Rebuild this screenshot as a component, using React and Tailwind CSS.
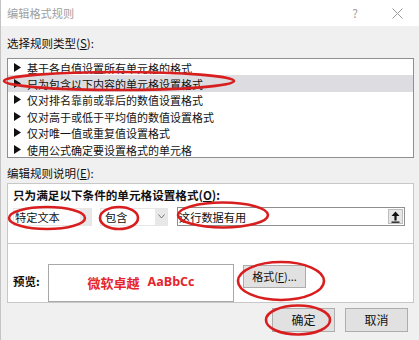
import React from "react";

const rules = [
    "基于各自值设置所有单元格的格式",
    "只为包含以下内容的单元格设置格式",
    "仅对排名靠前或靠后的数值设置格式",
    "仅对高于或低于平均值的数值设置格式",
    "仅对唯一值或重复值设置格式",
    "使用公式确定要设置格式的单元格",
];

const Arrow = () => (
    <svg width="7" height="9" viewBox="0 0 7 9" className="shrink-0">
        <path d="M0 0 L7 4.5 L0 9 Z" fill="#111" />
    </svg>
);

const Chevron = () => (
    <svg width="7" height="5" viewBox="0 0 7 5">
        <path d="M0.5 0.5 L3.5 4 L6.5 0.5" fill="none" stroke="#777" strokeWidth="1" />
    </svg>
);

const App = () => {
    return (
        <div className="relative w-[419px] h-[340px] bg-[#f0f0f0] border-l border-[#c4c4c4] overflow-hidden font-['Noto_Sans_CJK_SC','Microsoft_YaHei',sans-serif] text-[11px] text-[#111]">
            {/* title bar */}
            <div className="h-[26px] bg-white flex items-center pl-[6px] pr-[16px] text-[#a0a0a0]">
                <span className="text-[11.2px]">编辑格式规则</span>
                <span className="ml-auto text-[12px] mr-[34px]">?</span>
                <svg width="11" height="11" viewBox="0 0 11 11">
                    <path d="M0.5 0.5 L10.5 10.5 M10.5 0.5 L0.5 10.5" stroke="#9a9a9a" strokeWidth="1" />
                </svg>
            </div>

            <div className="mt-[10px] ml-[6px] h-[14px] leading-[14px] text-[11.5px]">
                选择规则类型(<u>S</u>):
            </div>

            {/* rule type list */}
            <div className="mt-[8px] ml-[6px] w-[407px] h-[100px] bg-white border border-[#8f8f8f] flex flex-col">
                {rules.map((r, i) => (
                    <div
                        key={r}
                        className={`h-[16.4px] flex items-center gap-[6px] pl-[6px] ${i === 1 ? "bg-[#dcdce1]" : ""}`}
                    >
                        <Arrow />
                        <span className="leading-[16px] mt-[1px]">{r}</span>
                    </div>
                ))}
            </div>

            <div className="mt-[8px] ml-[6px] h-[14px] leading-[14px] text-[11.5px]">
                编辑规则说明(<u>E</u>):
            </div>

            {/* rule description */}
            <div className="mt-[3px] ml-[6px] w-[407px] h-[120px] bg-white border border-[#c8c8c8] flex flex-col">
                <div className="h-[60px] border-b border-[#c8c8c8] px-[5px]">
                    <div className="mt-[4px] h-[14px] leading-[14px] font-bold text-[11.6px]">
                        只为满足以下条件的单元格设置格式(<u>O</u>):
                    </div>
                    <div className="mt-[5px] flex items-center h-[19px]">
                        <div className="w-[79px] h-[18px] flex border border-[#e6e6e6] bg-white">
                            <span className="flex-1 pl-[1px] leading-[16px] text-[11.2px]">特定文本</span>
                            <span className="w-[11px] bg-[#e8e8e8]"></span>
                        </div>
                        <div className="ml-[8px] w-[68px] h-[18px] flex border border-[#e6e6e6] bg-white">
                            <span className="flex-1 pl-[4px] leading-[16px] text-[11.2px]">包含</span>
                            <span className="w-[12px] bg-[#e8e8e8] flex items-center justify-center">
                                <Chevron />
                            </span>
                        </div>
                        <div className="ml-[9px] w-[228px] h-[19px] flex items-center border border-[#8f8f8f] bg-white">
                            <span className="flex-1 pl-[1px] leading-[16px] text-[11.2px]">这行数据有用</span>
                            <span className="w-[15px] h-[15px] mr-[1px] bg-[#e6e6e6] border border-[#bdbdbd] flex items-center justify-center">
                                <svg width="9" height="12" viewBox="0 0 9 12">
                                    <path d="M4.5 0.5 L8.5 5 L5.6 5 L5.6 9.5 L3.4 9.5 L3.4 5 L0.5 5 Z" fill="#111" />
                                    <rect x="0.5" y="10.5" width="8" height="1.3" fill="#111" />
                                </svg>
                            </span>
                        </div>
                    </div>
                </div>
                <div className="flex-1 flex items-center px-[5px]">
                    <span className="text-[11.5px] font-bold self-center mt-[17px] w-[35px]">预览:</span>
                    <div className="mt-[19px] w-[186px] h-[38px] border border-[#a8a8a8] flex items-center justify-center gap-[8px] text-[#e5242b] font-bold text-[13px]">
                        <span>微软卓越</span>
                        <span className="font-['Open_Sans','Liberation_Sans',sans-serif] text-[12.5px]">AaBbCc</span>
                    </div>
                    <button className="ml-[9px] mt-[7px] w-[63px] h-[23px] bg-[#e1e1e1] border border-[#adadad] text-[11px] leading-[21px]">
                        格式(<u>F</u>)...
                    </button>
                </div>
            </div>

            {/* footer */}
            <div className="mt-[5px] flex justify-end gap-[10px] pr-[11px]">
                <button className="w-[63px] h-[24px] bg-[#e1e1e1] border border-[#adadad] text-[12px] leading-[22px]">确定</button>
                <button className="w-[63px] h-[24px] bg-[#e1e1e1] border border-[#adadad] text-[12px] leading-[22px]">取消</button>
            </div>

            {/* red annotation marks */}
            <svg className="absolute inset-0 pointer-events-none" width="419" height="340" viewBox="0 0 419 340">
                <g fill="none" stroke="#d81e1e" strokeWidth="2.6">
                    <ellipse cx="118" cy="81" rx="115" ry="9" />
                    <ellipse cx="46" cy="218" rx="38" ry="11" />
                    <ellipse cx="118" cy="218" rx="19" ry="11" />
                    <ellipse cx="222" cy="215" rx="45" ry="12.5" />
                    <ellipse cx="280" cy="281" rx="43" ry="19" />
                    <ellipse cx="297" cy="320" rx="32" ry="14.5" />
                </g>
            </svg>
        </div>
    );
};

export default App;
